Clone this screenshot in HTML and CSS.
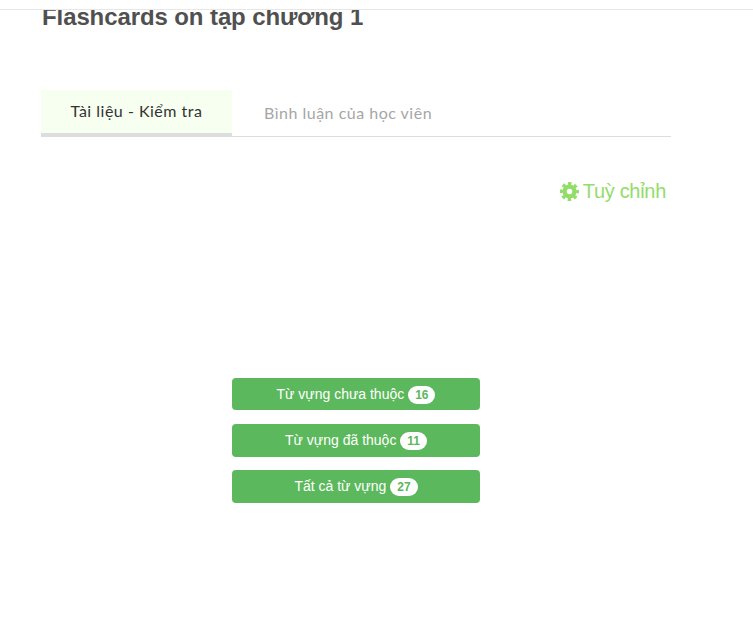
FILE: index.html
```html
<!DOCTYPE html>
<html>
<head>
    <title>Flashcards</title>
    <meta name="viewport" content="width=device-width, initial-scale=1.0">
    <link rel="stylesheet" href="styles.css">
</head>
<body>
    <div class="top-line"></div>

    <div class="content">
        <div class="title-clip">
            <h2 class="lesson-title">Flashcards on tạp chương 1</h2>
        </div>

        <div class="tabs">
            <div class="tab active">Tài liệu - Kiểm tra</div>
            <div class="tab">Bình luận của học viên</div>
        </div>

        <div class="settings-row">
            <a class="settings" href="#">
                <svg class="gear" viewBox="0 0 24 24" aria-hidden="true">
                    <circle class="gear-body" cx="12" cy="12" r="6.2"/>
                    <circle class="gear-teeth" cx="12" cy="12" r="10"/>
                </svg>
                Tuỳ chỉnh
            </a>
        </div>

        <div class="deck-buttons">
            <a class="deck-btn" href="#">Từ vựng chưa thuộc <span class="badge">16</span></a>
            <a class="deck-btn" href="#">Từ vựng đã thuộc <span class="badge">11</span></a>
            <a class="deck-btn" href="#">Tất cả từ vựng <span class="badge">27</span></a>
        </div>
    </div>
</body>
</html>
```

FILE: styles.css
```css
html, body {
    height: 100%;
}

body {
    margin: 0;
    background-color: #fff;
    font-family: "Liberation Sans", Arial, sans-serif;
    overflow: hidden;
}

.top-line {
    height: 9px;
    border-bottom: 1px solid #e7e7e7;
}

.content {
    width: 630px;
    margin-left: 41px;
}

.title-clip {
    height: 80px;
    overflow: hidden;
}

.lesson-title {
    margin: -8px 0 0 1px;
    font-size: 24px;
    line-height: 30px;
    font-weight: bold;
    letter-spacing: -0.1px;
    color: #505050;
}

.tabs {
    display: flex;
    height: 47px;
    box-sizing: border-box;
    border-bottom: 1px solid #ddd;
    font-family: Lato, sans-serif;
    font-size: 16px;
    letter-spacing: 0.5px;
}

.tab {
    padding: 13px 32px 0;
    color: #a6a6a6;
}

.tab.active {
    width: 191px;
    height: 47px;
    box-sizing: border-box;
    padding: 11px 0 0;
    text-align: center;
    color: #333;
    background-color: #f6fff0;
    border-bottom: 4px solid #ddd;
}

.settings-row {
    display: flex;
    justify-content: flex-end;
    padding: 42px 5px 0 0;
}

.settings {
    display: flex;
    align-items: center;
    gap: 4px;
    font-size: 20px;
    line-height: 24px;
    letter-spacing: -0.3px;
    color: #94dc6a;
    text-decoration: none;
}

.gear {
    width: 19px;
    height: 19px;
    margin-left: -1px;
}

.gear-body {
    fill: none;
    stroke: #94dc6a;
    stroke-width: 5.4;
}

/* eight teeth out of one dashed circle */
.gear-teeth {
    fill: none;
    stroke: #94dc6a;
    stroke-width: 4;
    stroke-dasharray: 4.4 3.454;
    stroke-dashoffset: 2.2;
}

.deck-buttons {
    display: flex;
    flex-direction: column;
    gap: 13.4px;
    width: 248px;
    margin: 174.8px 0 0 191px;
}

.deck-btn {
    display: block;
    height: 32.7px;
    line-height: 32.5px;
    border-radius: 4px;
    background-color: #5cb85c;
    color: #fff;
    font-size: 14px;
    text-align: center;
    text-decoration: none;
}

.badge {
    display: inline-block;
    min-width: 10px;
    padding: 3px 7px;
    border-radius: 10px;
    background-color: #fff;
    color: #5cb85c;
    font-size: 12px;
    font-weight: bold;
    line-height: 1;
}
```
